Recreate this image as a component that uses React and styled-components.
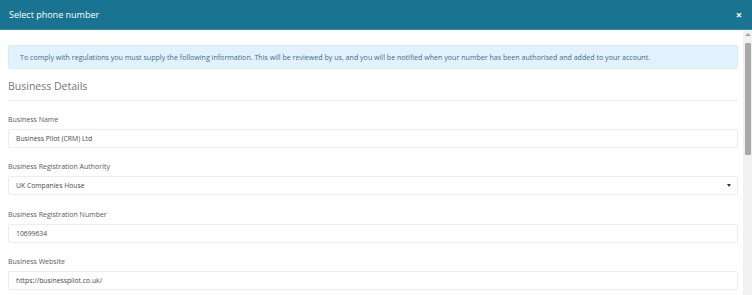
import React from "react";
import styled, { createGlobalStyle } from "styled-components";

const Global = createGlobalStyle`
  html, body { margin: 0; padding: 0; background: #fff; }
  body { font-family: "Open Sans", "Noto Sans", sans-serif; overflow: hidden; }
  * { box-sizing: border-box; }
`;

const Modal = styled.div`
  width: 752px;
  height: 295px;
  display: flex;
  flex-direction: column;
  background: #fff;
`;

const Header = styled.div`
  height: 30px;
  flex: none;
  background: #187491;
  border-bottom: 1px solid #3b8aa3;
  display: flex;
  align-items: center;
  justify-content: space-between;
  padding: 0 10px 0 9px;
`;

const Title = styled.div`
  color: #fff;
  font-size: 9px;
  line-height: 14px;
`;

const Close = styled.div`
  color: #fff;
  font-size: 11px;
  font-weight: 700;
  line-height: 10px;
`;

const BodyRow = styled.div`
  flex: 1;
  display: flex;
  min-height: 0;
`;

const Content = styled.div`
  flex: 1;
  padding: 15px 5px 0 8px;
  overflow: hidden;
`;

const Scrollbar = styled.div`
  width: 9px;
  flex: none;
  background: #f1f1f1;
  display: flex;
  flex-direction: column;
  align-items: center;
  padding-top: 3px;
`;

const ArrowUp = styled.div`
  width: 0;
  height: 0;
  border-left: 3px solid transparent;
  border-right: 3px solid transparent;
  border-bottom: 3px solid #a3a3a3;
`;

const Thumb = styled.div`
  margin-top: 7px;
  width: 6px;
  height: 112px;
  border-radius: 1px;
  background: #a8a8a8;
`;

const Alert = styled.div`
  background: #e2f2fc;
  border: 1px solid #d6ecf8;
  border-radius: 2px;
  color: #3d6f8c;
  font-size: 7.1px;
  line-height: 10px;
  padding: 6px 11px;
  height: 24px;
  white-space: nowrap;
`;

const SectionTitle = styled.div`
  margin-top: 10px;
  color: #757575;
  font-size: 10.5px;
  line-height: 14px;
  font-weight: 400;
  padding-bottom: 7px;
  border-bottom: 1px solid #ececec;
`;

const Form = styled.div`
  display: flex;
  flex-direction: column;
  gap: 14.33px;
  padding-top: 14px;
`;

const Field = styled.div`
  display: flex;
  flex-direction: column;
  gap: 4px;
`;

const Label = styled.div`
  color: #5a5a5a;
  font-size: 7px;
  line-height: 10px;
`;

const Input = styled.div`
  height: 19px;
  border: 1px solid #ededed;
  border-radius: 2px;
  background: #fff;
  display: flex;
  align-items: center;
  justify-content: space-between;
  padding: 0 6px 0 7px;
  color: #4a4a4a;
  font-size: 6.8px;
`;

const Caret = styled.span`
  width: 0;
  height: 0;
  border-left: 2.5px solid transparent;
  border-right: 2.5px solid transparent;
  border-top: 3px solid #333;
`;

const fields = [
  { label: "Business Name", value: "Business Pilot (CRM) Ltd" },
  { label: "Business Registration Authority", value: "UK Companies House", select: true },
  { label: "Business Registration Number", value: "10699634" },
  { label: "Business Website", value: "https://businesspilot.co.uk/" },
];

export default function App() {
  return (
    <>
      <Global />
      <Modal>
        <Header>
          <Title>Select phone number</Title>
          <Close>×</Close>
        </Header>
        <BodyRow>
          <Content>
            <Alert>
              To comply with regulations you must supply the following information. This will be reviewed by us, and you will be notified when your number has been authorised and added to your account.
            </Alert>
            <SectionTitle>Business Details</SectionTitle>
            <Form>
              {fields.map((f) => (
                <Field key={f.label}>
                  <Label>{f.label}</Label>
                  <Input>
                    <span>{f.value}</span>
                    {f.select && <Caret />}
                  </Input>
                </Field>
              ))}
            </Form>
          </Content>
          <Scrollbar>
            <ArrowUp />
            <Thumb />
          </Scrollbar>
        </BodyRow>
      </Modal>
    </>
  );
}
